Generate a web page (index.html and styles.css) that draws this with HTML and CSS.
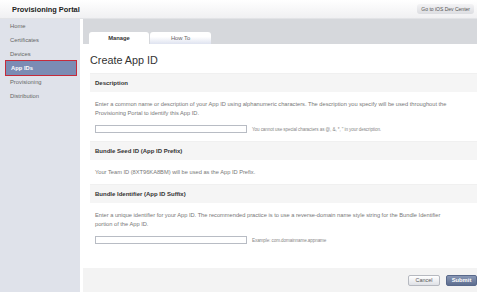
FILE: index.html
```html
<!DOCTYPE html>
<html lang="en">
<head>
    <meta charset="UTF-8">
    <title>Provisioning Portal</title>
    <link rel="stylesheet" href="styles.css">
</head>
<body>
    <div class="top-bar">
        <div class="portal-title">Provisioning Portal</div>
        <a class="dev-center-btn">Go to iOS Dev Center</a>
    </div>

    <div class="layout">
        <div class="sidebar">
            <div class="nav-item">Home</div>
            <div class="nav-item">Certificates</div>
            <div class="nav-item">Devices</div>
            <div class="nav-item active">App IDs</div>
            <div class="nav-item">Provisioning</div>
            <div class="nav-item">Distribution</div>
        </div>

        <div class="main">
            <div class="tab-bar">
                <div class="tab current">Manage</div>
                <div class="tab">How To</div>
            </div>

            <div class="content">
                <h1 class="page-title">Create App ID</h1>

                <div class="section-head">Description</div>
                <p class="section-text">Enter a common name or description of your App ID using alphanumeric characters. The description you specify will be used throughout the Provisioning Portal to identify this App ID.</p>
                <div class="field-row">
                    <input class="text-field" type="text">
                    <span class="field-note">You cannot use special characters as @, &amp;, *, " in your description.</span>
                </div>

                <div class="section-head">Bundle Seed ID (App ID Prefix)</div>
                <p class="section-text">Your Team ID (8XT96KA8BM) will be used as the App ID Prefix.</p>

                <div class="section-head">Bundle Identifier (App ID Suffix)</div>
                <p class="section-text">Enter a unique identifier for your App ID. The recommended practice is to use a reverse-domain name style string for the Bundle Identifier<br>portion of the App ID.</p>
                <div class="field-row">
                    <input class="text-field" type="text">
                    <span class="field-note">Example: com.domainname.appname</span>
                </div>
            </div>

            <div class="form-footer">
                <button class="btn cancel-btn">Cancel</button>
                <button class="btn submit-btn">Submit</button>
            </div>
        </div>
    </div>
</body>
</html>
```

FILE: styles.css
```css
* {
    box-sizing: border-box;
}

body {
    margin: 0;
    width: 477px;
    height: 292px;
    overflow: hidden;
    font-family: "Liberation Sans", Arial, sans-serif;
    background: #fff;
    color: #555;
}

.top-bar {
    height: 19px;
    display: flex;
    align-items: center;
    justify-content: space-between;
    padding: 0 3px 0 12px;
    background: linear-gradient(#ffffff, #f0f0f2);
    border-bottom: 1px solid #e2e3e6;
}

.portal-title {
    font-size: 7.4px;
    font-weight: bold;
    color: #222;
}

.dev-center-btn {
    font-size: 5px;
    color: #555;
    background: linear-gradient(#f3f3f5, #dcdde1);
    border-radius: 3px;
    padding: 2px 4px;
}

.layout {
    display: flex;
    height: 273px;
}

.sidebar {
    width: 80px;
    background: #dfe2ea;
    margin-right: 3px;
}

.nav-item {
    height: 14px;
    line-height: 14px;
    padding-left: 10px;
    font-size: 5.8px;
    color: #666;
}

.nav-item.active {
    margin: 0 4px 0 6px;
    padding-left: 5px;
    background: #7b8cb4;
    color: #fff;
    font-weight: bold;
    outline: 1px solid #c52b3b;
}

.main {
    flex: 1;
    display: flex;
    flex-direction: column;
}

.tab-bar {
    height: 25px;
    background: #d6d8dc;
    display: flex;
    align-items: flex-end;
    padding-left: 6px;
    gap: 1px;
}

.tab {
    width: 61px;
    height: 12px;
    line-height: 12px;
    text-align: center;
    font-size: 5.8px;
    color: #666;
    background: linear-gradient(#ffffff 40%, #dfe3f0);
    border-radius: 3px 3px 0 0;
}

.tab.current {
    width: 60px;
    background: #fff;
    color: #333;
    font-weight: bold;
}

.content {
    flex: 1;
    padding: 0 0 0 7px;
}

.page-title {
    margin: 10px 0 7px;
    font-size: 10.8px;
    font-weight: normal;
    color: #333;
}

.section-head {
    height: 19px;
    line-height: 19px;
    padding-left: 5px;
    background: #f5f5f5;
    border-top: 1px solid #f0f0f0;
    font-size: 6px;
    font-weight: bold;
    color: #333;
}

.section-text {
    margin: 8px 0 7px 5px;
    font-size: 5.7px;
    line-height: 9px;
    color: #777;
}

.field-row {
    display: flex;
    align-items: center;
    gap: 5px;
    padding-left: 5px;
    margin-bottom: 8px;
}

.text-field {
    width: 152px;
    height: 8px;
    border: 1px solid #b8bcc4;
    padding: 0;
    margin: 0;
    background: #fff;
}

.field-note {
    font-size: 4.6px;
    letter-spacing: -0.1px;
    color: #888;
}

.form-footer {
    height: 24px;
    background: #f3f3f3;
    display: flex;
    align-items: center;
    justify-content: flex-end;
    gap: 6px;
}

.btn {
    height: 11px;
    border: 1px solid #b6b9c0;
    border-radius: 2px;
    font-family: "Liberation Sans", Arial, sans-serif;
    font-size: 5.4px;
    padding: 0;
}

.cancel-btn {
    width: 32px;
    background: linear-gradient(#ffffff, #dfe1e6);
    color: #555;
}

.submit-btn {
    width: 31px;
    background: linear-gradient(#8897b5, #5d6d8f);
    border-color: #59698b;
    color: #fff;
    font-weight: bold;
    font-size: 5.8px;
}
```
